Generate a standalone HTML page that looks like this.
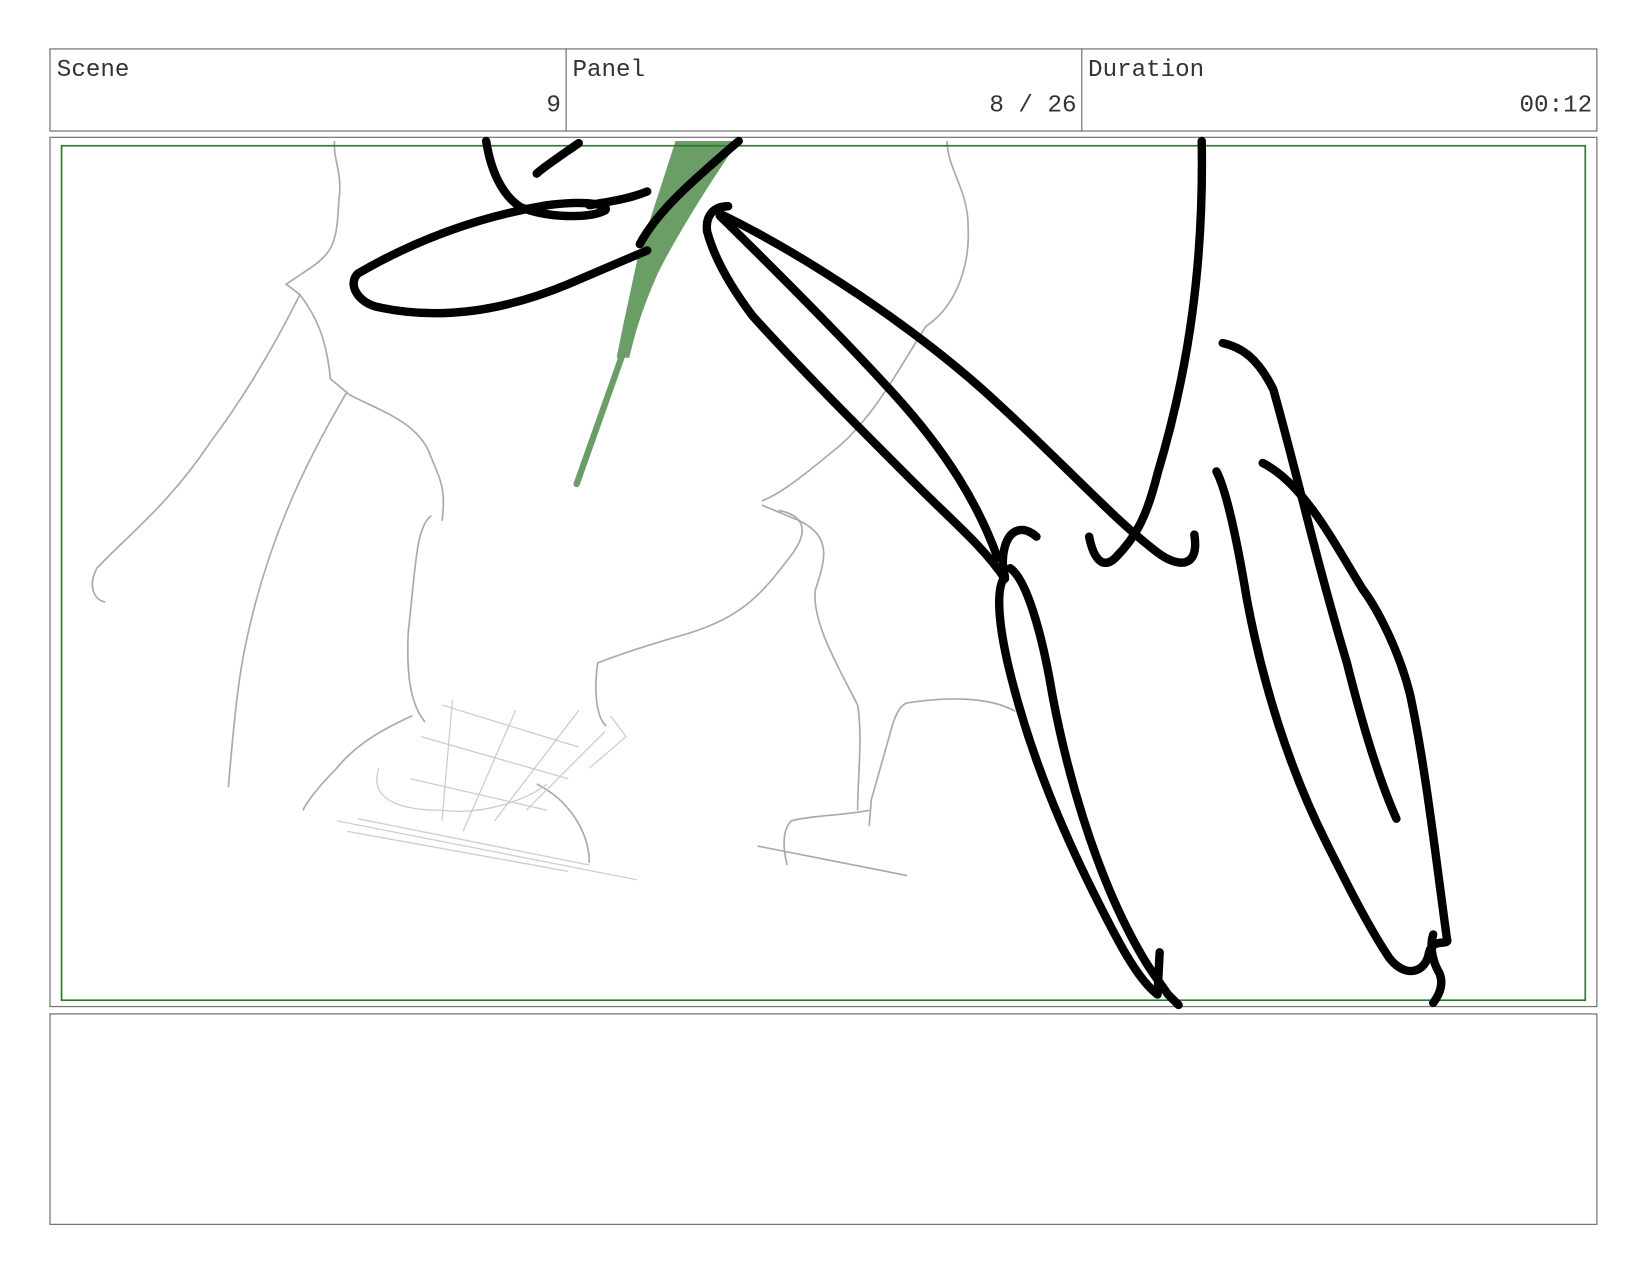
<!DOCTYPE html>
<html><head><meta charset="utf-8"><style>html,body{margin:0;padding:0;background:#fff}svg{display:block}</style></head>
<body>
<svg width="1650" height="1275" viewBox="0 0 1568 1211.6" preserveAspectRatio="none" xmlns="http://www.w3.org/2000/svg">
<rect width="1568" height="1212" fill="#fff"/>
<g fill="none" stroke="#777" stroke-width="1.2">
<rect x="47.5" y="46.5" width="1470" height="78"/>
<line x1="538" y1="46" x2="538" y2="124"/>
<line x1="1028" y1="46" x2="1028" y2="124"/>
<rect x="47.5" y="130.5" width="1470" height="826"/>
<rect x="47.5" y="963.5" width="1470" height="200"/>
</g>
<g font-family="Liberation Mono, monospace" font-size="23" fill="#333" font-weight="300">
<text x="54" y="72">Scene</text>
<text x="533" y="106" text-anchor="end">9</text>
<text x="544" y="72">Panel</text>
<text x="1023" y="106" text-anchor="end">8 / 26</text>
<text x="1034" y="72">Duration</text>
<text x="1513" y="106" text-anchor="end">00:12</text>
</g>
<!-- gray sketch -->
<g fill="none" stroke="#aaa" stroke-width="1.6">
<path d="M318 134 C316 150 326 165 322 190 C320 230 318 240 290 258 L272 270 L285 280 C300 300 310 320 314 360 L332 375 C360 390 395 400 408 430 C415 450 425 460 420 495"/>
<path d="M285 280 C260 330 230 380 200 420 C160 480 120 510 92 540 C84 555 88 570 100 572"/>
<path d="M330 372 C290 440 250 520 230 630 C225 660 222 690 217 748"/>
<path d="M410 490 C395 500 395 540 388 600 C386 640 390 670 404 686"/>
<path d="M900 134 C900 160 920 180 920 215 C922 250 910 290 880 310 C860 340 830 400 790 430 C760 455 740 470 724 476"/>
<path d="M724 480 L760 495 C790 510 785 530 775 560 C770 590 800 640 815 670 C820 700 815 740 815 770 M826 785 L828 760 L845 700 C850 680 855 670 862 668 C900 662 940 662 965 676"/>
<path d="M740 485 C765 490 770 505 750 530 C720 570 700 590 640 606 C600 618 580 625 568 630 C565 650 565 680 576 690"/>
<path d="M826 770 C800 775 770 775 752 780 C742 790 745 810 748 822 M720 804 L862 832"/>
<path d="M392 680 C370 690 340 705 320 730 C300 750 290 765 288 770 M510 745 C540 760 560 790 560 820"/>
</g>
<g fill="none" stroke="#ccc" stroke-width="1.2">
<path d="M420 670 L550 710 M400 700 L540 740 M390 740 L520 770 M430 665 L420 780 M490 675 L440 790 M550 675 L470 780 M575 695 L500 770 M320 780 L605 836 M340 778 L560 822 M330 790 L540 828 M360 730 C350 760 380 770 420 770 C460 775 500 760 520 745 M580 680 L595 700 L560 730"/>
</g>
<!-- green shape -->
<path d="M642 134 L702 134 C670 180 640 230 625 260 C612 290 605 310 598 340 L586 340 L592 310 L606 245 Z" fill="#6a9e66"/>
<path d="M594 330 L548 460" stroke="#6a9e66" stroke-width="6" fill="none" stroke-linecap="round"/>
<!-- green frame -->
<rect x="58.5" y="138.5" width="1448" height="812" fill="none" stroke="#2e7a2e" stroke-width="1.6"/>
<!-- black strokes -->
<g fill="none" stroke="#000" stroke-width="8" stroke-linecap="round" stroke-linejoin="round">
<path d="M462 134 C466 160 476 185 495 197 C520 207 560 208 575 200 C580 195 560 190 520 195 C460 205 400 225 340 260 C330 270 340 288 360 292 C420 305 480 295 540 270 L615 238"/>
<path d="M550 136 C530 150 515 160 510 165"/>
<path d="M615 182 C595 190 575 192 560 195"/>
<path d="M702 134 C660 170 625 200 608 232"/>
<path d="M692 196 C678 196 670 205 672 220 C680 250 700 280 715 300 C760 350 820 410 870 460 C905 495 935 520 955 550"/>
<path d="M684 205 C740 260 800 320 850 375 C900 430 930 480 948 530"/>
<path d="M684 203 C760 240 870 310 950 385 C1010 440 1060 495 1100 525 C1120 540 1140 540 1135 508"/>
<path d="M1142 134 C1144 250 1130 350 1100 450 C1090 490 1080 510 1060 530 C1050 540 1040 535 1035 510"/>
<path d="M955 548 C950 530 955 510 965 505 C975 500 985 510 985 510 M955 548 C945 560 950 600 960 640 C980 720 1010 790 1040 850 C1060 890 1080 930 1100 945 M960 540 C975 550 990 600 1000 660 C1015 740 1040 820 1070 880 C1090 920 1100 930 1110 945 L1120 955 M1100 945 L1102 905"/>
<path d="M1162 326 C1180 330 1195 340 1210 370 C1230 440 1250 530 1280 630 C1295 690 1310 740 1327 778"/>
<path d="M1156 448 C1165 465 1175 510 1185 570 C1200 650 1225 730 1260 800 C1280 840 1300 880 1320 910 C1335 930 1355 925 1358 905 C1362 890 1378 900 1375 892 C1365 820 1355 730 1340 660 C1330 620 1310 580 1295 560 C1270 520 1240 460 1200 440"/>
<path d="M1362 888 C1358 900 1362 915 1368 925 C1372 935 1368 945 1362 953"/>
</g>
</svg>
</body></html>
